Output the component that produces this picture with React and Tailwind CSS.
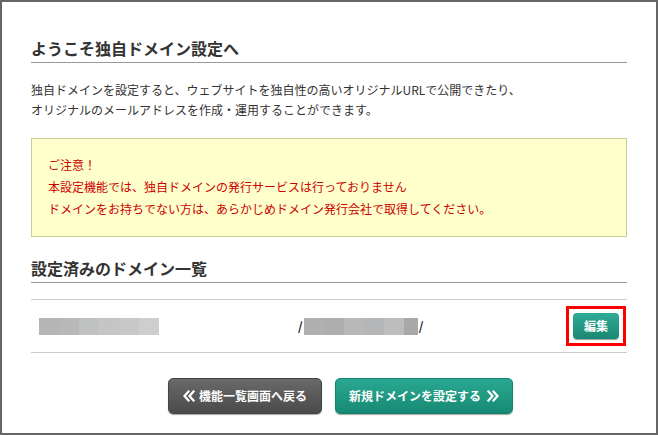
import React from "react";

const font = { fontFamily: '"Noto Sans CJK JP", "Noto Sans", sans-serif' };

function Chevrons({ dir = "left" }) {
  return (
    <svg width="12" height="12" viewBox="0 0 12 12" fill="none" stroke="currentColor" strokeWidth="2.2" strokeLinecap="square" strokeLinejoin="miter">
      {dir === "left" ? (
        <>
          <polyline points="5.5,1.5 1.5,6 5.5,10.5" />
          <polyline points="10.5,1.5 6.5,6 10.5,10.5" />
        </>
      ) : (
        <>
          <polyline points="1.5,1.5 5.5,6 1.5,10.5" />
          <polyline points="6.5,1.5 10.5,6 6.5,10.5" />
        </>
      )}
    </svg>
  );
}

export default function App() {
  const blur1 = ["#b5b5b5", "#b8b8b8", "#c0c2c2", "#c5c5c5", "#c8c8c8", "#cdcfce"];
  const blur2 = ["#b0b0b0", "#aeaeae", "#b8b8b6", "#b5b6b8", "#bdbdbd"];
  return (
    <div style={font} className="w-[658px] h-[435px] border-2 border-[#666] bg-white px-[29px] text-[#333] overflow-hidden">
      <h1 className="mt-[34px] text-[16px] leading-[24px] font-bold pb-[2px] border-b border-[#999]">
        ようこそ独自ドメイン設定へ
      </h1>
      <p className="mt-[17px] text-[12px] leading-[20px]">
        独自ドメインを設定すると、ウェブサイトを独自性の高いオリジナルURLで公開できたり、
        <br />
        オリジナルのメールアドレスを作成・運用することができます。
      </p>
      <div className="mt-[18px] border border-[#cccc99] bg-[#ffffcc] pt-[15px] pb-[16px] px-[16px] text-[12px] leading-[22px] text-[#cc0000]">
        <div>ご注意！</div>
        <div>本設定機能では、独自ドメインの発行サービスは行っておりません</div>
        <div>ドメインをお持ちでない方は、あらかじめドメイン発行会社で取得してください。</div>
      </div>
      <h2 className="mt-[19px] text-[16px] leading-[24px] font-bold pb-[2px] border-b border-[#999]">
        設定済みのドメイン一覧
      </h2>
      <div className="mt-[16px] border-t border-b border-[#ccc] h-[54px] flex items-center">
        <div className="ml-[8px] w-[259px] flex">
          <div className="flex h-[17px]">
            {blur1.map((c, i) => (
              <div key={i} className="w-[20px] h-[17px]" style={{ background: c }} />
            ))}
          </div>
        </div>
        <div className="flex items-center text-[12px] font-bold text-[#222]">
          <span>/</span>
          <div className="flex h-[17px] ml-[1px]">
            {blur2.map((c, i) => (
              <div key={i} className="w-[20px] h-[17px]" style={{ background: c }} />
            ))}
            <div className="w-[14px] h-[17px] bg-[#a9a8a8]" />
          </div>
          <span className="ml-[1px]">/</span>
        </div>
        <div className="ml-auto mr-[1px] border-[3px] border-[#ff0000] p-[4px]">
          <button className="w-[46px] h-[26px] rounded-[4px] bg-gradient-to-b from-[#2eab95] to-[#1a8872] text-white text-[12px] font-bold shadow-[0_1px_1px_rgba(0,0,0,0.4)] flex items-center justify-center">
            編集
          </button>
        </div>
      </div>
      <div className="mt-[25px] flex justify-center gap-[13px] pl-[23px]">
        <button className="w-[154px] h-[36px] rounded-[5px] border border-[#444] bg-gradient-to-b from-[#6a6a6a] to-[#4a4a4a] text-white text-[12px] font-bold flex items-center justify-center gap-[4px] shadow-[0_1px_1px_rgba(0,0,0,0.35)]">
          <Chevrons dir="left" />
          <span>機能一覧画面へ戻る</span>
        </button>
        <button className="w-[178px] h-[36px] rounded-[5px] border border-[#15806c] bg-gradient-to-b from-[#2aa892] to-[#168a74] text-white text-[12px] font-bold flex items-center justify-center gap-[6px] shadow-[0_1px_1px_rgba(0,0,0,0.35)]">
          <span>新規ドメインを設定する</span>
          <Chevrons dir="right" />
        </button>
      </div>
    </div>
  );
}
